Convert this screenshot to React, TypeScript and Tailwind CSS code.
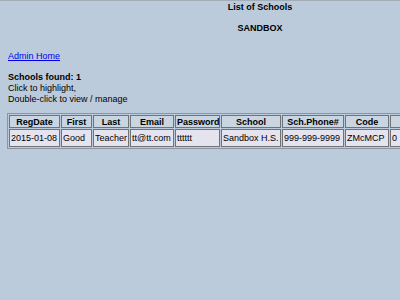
const columns = [
  { label: "RegDate", width: "w-[51px]" },
  { label: "First", width: "w-[31px]" },
  { label: "Last", width: "w-[36px]" },
  { label: "Email", width: "w-[44px]" },
  { label: "Password", width: "w-[45px]" },
  { label: "School", width: "w-[60px]" },
  { label: "Sch.Phone#", width: "w-[62px]" },
  { label: "Code", width: "w-[44px]" },
  { label: "", width: "w-[40px]" }
]

const schools = [
  ["2015-01-08", "Good", "Teacher", "tt@tt.com", "tttttt", "Sandbox H.S.", "999-999-9999", "ZMcMCP", "0"]
]

const App = () => {
  return (
    <div className="h-[300px] w-[400px] overflow-hidden border-t border-[#a3adb8] bg-[#bccbdb] font-['Liberation_Sans',Arial,sans-serif] text-[9px] leading-[11px] text-black">
      <div className="w-[520px] pt-px text-center font-bold">List of Schools</div>
      <div className="mt-[10px] w-[520px] text-center font-bold">SANDBOX</div>

      <div className="mt-[17px] px-2">
        <a href="#" className="text-[#0000ee] underline">
          Admin Home
        </a>
      </div>

      <div className="mt-[10px] px-2">
        <div className="font-bold">Schools found: 1</div>
        <div>Click to highlight,</div>
        <div>Double-click to view / manage</div>
      </div>

      <table className="mt-[8px] ml-[7px] w-[425px] table-fixed border-separate border-spacing-[1px] border border-[#8c959e]">
        <thead>
          <tr className="h-[13px]">
            {columns.map((col, i) => (
              <th
                key={i}
                className={`${col.width} border border-[#6e747a] bg-[#c9d5e1] px-px py-0 text-center font-bold leading-[10px] whitespace-nowrap`}
              >
                {col.label}
              </th>
            ))}
          </tr>
        </thead>
        <tbody>
          {schools.map((row) => (
            <tr key={row[0]} className="h-[18px]">
              {row.map((cell, i) => (
                <td
                  key={i}
                  className="border border-[#6e747a] bg-[#e5e3ee] px-px py-0 text-left whitespace-nowrap"
                >
                  {cell}
                </td>
              ))}
            </tr>
          ))}
        </tbody>
      </table>
    </div>
  )
}

export default App
